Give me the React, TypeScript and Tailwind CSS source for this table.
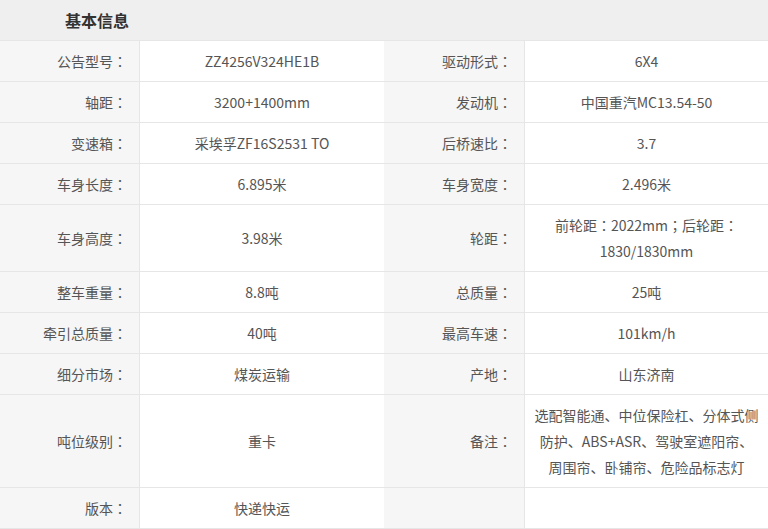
const P = ({ c }: { c: string }) => <span className="font-['Noto_Sans_CJK_JP',sans-serif]">{c}</span>;

const rows: [string, React.ReactNode, string, React.ReactNode][] = [
	["公告型号", "ZZ4256V324HE1B", "驱动形式", "6X4"],
	["轴距", "3200+1400mm", "发动机", "中国重汽MC13.54-50"],
	["变速箱", "采埃孚ZF16S2531 TO", "后桥速比", "3.7"],
	["车身长度", "6.895米", "车身宽度", "2.496米"],
	[
		"车身高度",
		"3.98米",
		"轮距",
		<>
			前轮距<P c="：" />2022mm<P c="；" />后轮距<P c="：" />
			<br />
			1830/1830mm
		</>,
	],
	["整车重量", "8.8吨", "总质量", "25吨"],
	["牵引总质量", "40吨", "最高车速", "101km/h"],
	["细分市场", "煤炭运输", "产地", "山东济南"],
	[
		"吨位级别",
		"重卡",
		"备注",
		<>
			选配智能通、中位保险杠、分体式侧
			<br />
			防护、ABS+ASR、驾驶室遮阳帘、
			<br />
			周围帘、卧铺帘、危险品标志灯
		</>,
	],
	["版本", "快递快运", "", ""],
];

function Label({ text }: { text: string }) {
	return (
		<div className="bg-[#f6f6f6] border-r border-[#e6e6e6] flex items-center justify-end pr-[12px] py-[7px]">
			{text && (
				<span>
					{text}
					<P c="：" />
				</span>
			)}
		</div>
	);
}

function Value({ children }: { children: React.ReactNode }) {
	return (
		<div className="flex items-center justify-center text-center px-2 py-[7px]">
			<div>{children}</div>
		</div>
	);
}

export default function App() {
	return (
		<div className="w-[768px] h-[529px] bg-white overflow-hidden text-[14px] text-[#555] font-['Microsoft_YaHei','Noto_Sans_CJK_SC',sans-serif]">
			<div className="h-10 bg-[#efefef] flex items-center pl-[65px]">
				<h2 className="text-[16px] font-bold text-[#333]">基本信息</h2>
			</div>
			{rows.map(([l1, v1, l2, v2], i) => (
				<div
					key={i}
					className={`grid grid-cols-[140px_244px_141px_243px] border-t border-[#e6e6e6] leading-[26px] ${i === rows.length - 1 ? "border-b" : ""}`}
				>
					<Label text={l1} />
					<Value>{v1}</Value>
					<Label text={l2} />
					<Value>{v2}</Value>
				</div>
			))}
		</div>
	);
}
